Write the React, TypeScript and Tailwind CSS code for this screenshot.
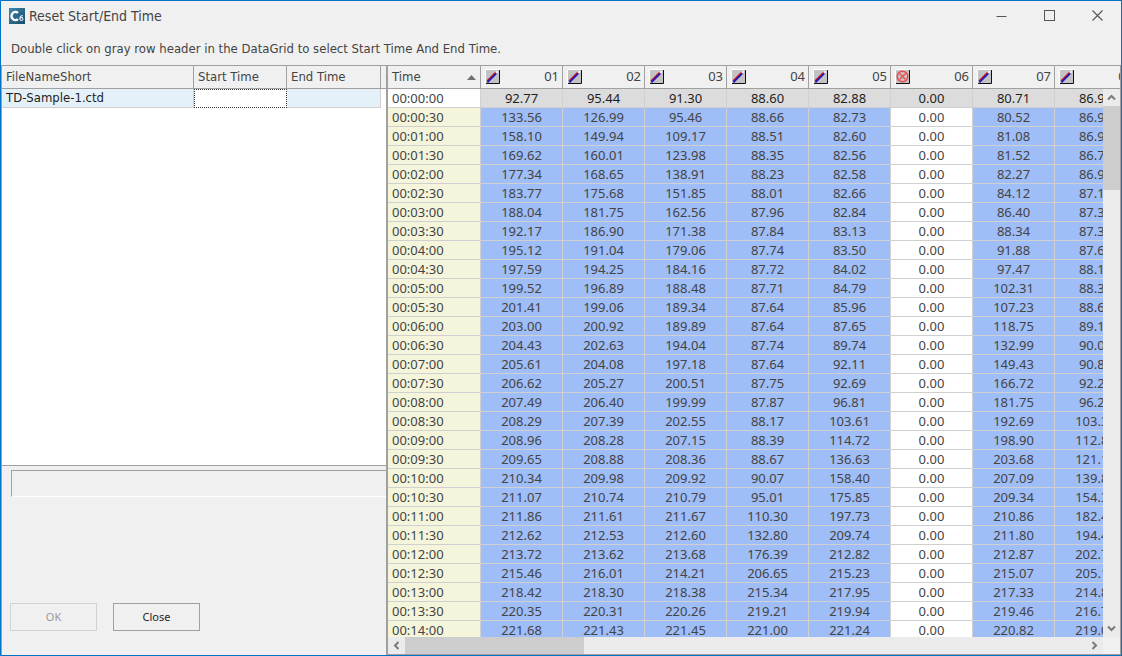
import { useState } from 'react'

interface Row {
  time: string
  values: string[]
}

const DATA = `
00:00:00 92.77 95.44 91.30 88.60 82.88 0.00 80.71 86.96
00:00:30 133.56 126.99 95.46 88.66 82.73 0.00 80.52 86.94
00:01:00 158.10 149.94 109.17 88.51 82.60 0.00 81.08 86.91
00:01:30 169.62 160.01 123.98 88.35 82.56 0.00 81.52 86.79
00:02:00 177.34 168.65 138.91 88.23 82.58 0.00 82.27 86.95
00:02:30 183.77 175.68 151.85 88.01 82.66 0.00 84.12 87.12
00:03:00 188.04 181.75 162.56 87.96 82.84 0.00 86.40 87.33
00:03:30 192.17 186.90 171.38 87.84 83.13 0.00 88.34 87.38
00:04:00 195.12 191.04 179.06 87.74 83.50 0.00 91.88 87.64
00:04:30 197.59 194.25 184.16 87.72 84.02 0.00 97.47 88.12
00:05:00 199.52 196.89 188.48 87.71 84.79 0.00 102.31 88.36
00:05:30 201.41 199.06 189.34 87.64 85.96 0.00 107.23 88.65
00:06:00 203.00 200.92 189.89 87.64 87.65 0.00 118.75 89.14
00:06:30 204.43 202.63 194.04 87.74 89.74 0.00 132.99 90.02
00:07:00 205.61 204.08 197.18 87.64 92.11 0.00 149.43 90.85
00:07:30 206.62 205.27 200.51 87.75 92.69 0.00 166.72 92.26
00:08:00 207.49 206.40 199.99 87.87 96.81 0.00 181.75 96.24
00:08:30 208.29 207.39 202.55 88.17 103.61 0.00 192.69 103.36
00:09:00 208.96 208.28 207.15 88.39 114.72 0.00 198.90 112.84
00:09:30 209.65 208.88 208.36 88.67 136.63 0.00 203.68 121.15
00:10:00 210.34 209.98 209.92 90.07 158.40 0.00 207.09 139.82
00:10:30 211.07 210.74 210.79 95.01 175.85 0.00 209.34 154.34
00:11:00 211.86 211.61 211.67 110.30 197.73 0.00 210.86 182.41
00:11:30 212.62 212.53 212.60 132.80 209.74 0.00 211.80 194.47
00:12:00 213.72 213.62 213.68 176.39 212.82 0.00 212.87 202.73
00:12:30 215.46 216.01 214.21 206.65 215.23 0.00 215.07 205.16
00:13:00 218.42 218.30 218.38 215.34 217.95 0.00 217.33 214.85
00:13:30 220.35 220.31 220.26 219.21 219.94 0.00 219.46 216.72
00:14:00 221.68 221.43 221.45 221.00 221.24 0.00 220.82 219.03
`

const ROWS: Row[] = DATA.trim()
  .split('\n')
  .map((line) => {
    const [time, ...values] = line.split(' ')
    return { time, values }
  })

const CHANNELS = ['01', '02', '03', '04', '05', '06', '07', '08']
const DISABLED_CHANNEL = '06'

function AppIcon() {
  return (
    <svg width="16" height="16" viewBox="0 0 16 16" aria-hidden="true">
      <defs>
        <linearGradient id="logo" x1="0" y1="0" x2="1" y2="1">
          <stop offset="0" stopColor="#3a87ad" />
          <stop offset="1" stopColor="#1b4b66" />
        </linearGradient>
      </defs>
      <rect width="16" height="16" fill="url(#logo)" />
      <path d="M9 4.9A4 4 0 1 0 9 11.1" fill="none" stroke="#fff" strokeWidth="2.4" />
      <path d="M13.8 7.6C12 7.4 10.9 8.8 10.9 10.6" fill="none" stroke="#cfe6f2" strokeWidth="1.3" />
      <circle cx="12.4" cy="10.9" r="1.5" fill="none" stroke="#cfe6f2" strokeWidth="1.2" />
    </svg>
  )
}

function PenIcon() {
  return (
    <svg width="15" height="15" viewBox="0 0 15 15" aria-hidden="true">
      <rect width="15" height="15" fill="#c3c3c3" />
      <path d="M0.5 15V0.5H15" fill="none" stroke="#fff" />
      <path d="M1 14.5H14.5V1" fill="none" stroke="#111" />
      <path d="M2 12L10.8 3.2" stroke="#c01020" strokeWidth="1.5" />
      <path d="M2.4 13.4L11.8 4" stroke="#1a10c0" strokeWidth="1.7" />
      <path d="M11 4L12.8 2.2" stroke="#f4f4f4" strokeWidth="2" />
    </svg>
  )
}

function OffIcon() {
  return (
    <svg width="15" height="15" viewBox="0 0 15 15" aria-hidden="true">
      <rect width="15" height="15" fill="#c3c3c3" />
      <path d="M0.5 15V0.5H15" fill="none" stroke="#fff" />
      <path d="M1 14.5H14.5V1" fill="none" stroke="#111" />
      <circle cx="7.5" cy="7.5" r="5.3" fill="none" stroke="#f04848" strokeWidth="1.5" />
      <path d="M4.5 4.5L10.5 10.5M10.5 4.5L4.5 10.5" stroke="#f04848" strokeWidth="1.2" />
    </svg>
  )
}

function Chevron({ d }: { d: string }) {
  return (
    <svg width="9" height="9" viewBox="0 0 9 9" aria-hidden="true">
      <path d={d} fill="none" stroke="#7a7a7a" strokeWidth="2" />
    </svg>
  )
}

function TitleBar() {
  return (
    <header className="flex h-[30px] shrink-0 items-center pl-2">
      <AppIcon />
      <h1 className="ml-1 flex-1 text-[14px]">Reset Start/End Time</h1>
      <div className="flex h-full pb-[2px] text-[#555]">
        <button type="button" aria-label="Minimize" className="flex w-12 items-center justify-center">
          <svg width="11" height="11" viewBox="0 0 11 11">
            <path d="M0.5 6.5H10.5" stroke="currentColor" />
          </svg>
        </button>
        <button type="button" aria-label="Maximize" className="flex w-12 items-center justify-center">
          <svg width="11" height="11" viewBox="0 0 11 11">
            <rect x="0.5" y="0.5" width="10" height="10" fill="none" stroke="currentColor" />
          </svg>
        </button>
        <button type="button" aria-label="Close window" className="flex w-12 items-center justify-center">
          <svg width="11" height="11" viewBox="0 0 11 11">
            <path d="M0.5 0.5L10.5 10.5M10.5 0.5L0.5 10.5" stroke="currentColor" strokeWidth="1.1" />
          </svg>
        </button>
      </div>
    </header>
  )
}

function FileGrid() {
  return (
    <div className="h-[400px] border-b border-[#a0a0a0] bg-white">
      <table className="w-full table-fixed border-separate border-spacing-0">
        <colgroup>
          <col className="w-[192px]" />
          <col className="w-[93px]" />
          <col className="w-[94px]" />
          <col />
        </colgroup>
        <thead>
          <tr className="h-[23px] bg-[#f0f0f0] text-left">
            <th className="border-r border-b border-[#a0a0a0] px-1 font-normal">FileNameShort</th>
            <th className="border-r border-b border-[#a0a0a0] px-1 font-normal">Start Time</th>
            <th className="border-r border-b border-[#a0a0a0] px-1 font-normal">End Time</th>
            <td className="border-b border-[#a0a0a0]" />
          </tr>
        </thead>
        <tbody>
          <tr className="h-[19px] text-[#1e1e1e]">
            <td className="border-r border-b border-[#d0d0d0] bg-[#e4f1f9] px-1">TD-Sample-1.ctd</td>
            <td className="border border-dotted border-[#333] bg-white" />
            <td className="border-r border-b border-[#d0d0d0] bg-[#e4f1f9]" />
            <td />
          </tr>
        </tbody>
      </table>
    </div>
  )
}

function DataGrid() {
  const [selected, setSelected] = useState(0)

  function cellColor(channel: string, row: number) {
    if (row === selected) return 'bg-[#dcdcdc] text-[#1e1e1e]'
    if (channel === DISABLED_CHANNEL) return 'bg-white'
    return 'bg-[#9fbdf6]'
  }

  return (
    <div className="relative min-h-0 flex-1 overflow-hidden">
      <table className="w-[749px] table-fixed border-separate border-spacing-0 font-['Noto_Sans',sans-serif]">
        <thead>
          <tr className="h-[23px]">
            <th className="w-[93px] border-r border-b border-[#a0a0a0] px-1 text-left font-['DejaVu_Sans_Condensed','DejaVu_Sans',sans-serif] font-normal">
              <div className="flex items-center justify-between">
                Time
                <svg width="9" height="5" viewBox="0 0 9 5" aria-hidden="true">
                  <path d="M0 5L4.5 0L9 5Z" fill="#707070" />
                </svg>
              </div>
            </th>
            {CHANNELS.map((channel) => (
              <th key={channel} className="w-[82px] border-r border-b border-[#a0a0a0] pr-[3px] pb-[2px] pl-1 font-normal">
                <div className="flex items-center justify-between">
                  <button type="button" aria-label={`Channel ${channel}`}>
                    {channel === DISABLED_CHANNEL ? <OffIcon /> : <PenIcon />}
                  </button>
                  {channel}
                </div>
              </th>
            ))}
          </tr>
        </thead>
        <tbody>
          {ROWS.map((row, i) => (
            <tr key={row.time} className="h-[19px]" onDoubleClick={() => setSelected(i)}>
              <td className={`border-r border-b border-[#d0d0d0] px-1 ${i === selected ? 'bg-white' : 'bg-[#f5f5dc]'}`}>
                {row.time}
              </td>
              {row.values.map((value, c) => (
                <td
                  key={CHANNELS[c]}
                  className={`border-r border-b border-[#d0d0d0] text-center ${cellColor(CHANNELS[c], i)}`}
                >
                  {value}
                </td>
              ))}
            </tr>
          ))}
        </tbody>
      </table>

      {/* Vertical scroll bar, below the header */}
      <div className="absolute top-[23px] right-0 bottom-0 flex w-[17px] flex-col bg-[#ebebeb]">
        <button type="button" aria-label="Scroll up" className="flex h-[17px] items-center justify-center">
          <Chevron d="M1 6.5L4.5 3L8 6.5" />
        </button>
        <div className="h-[84px] bg-[#cdcdcd]" />
        <div className="flex-1" />
        <button type="button" aria-label="Scroll down" className="flex h-[17px] items-center justify-center">
          <Chevron d="M1 2.5L4.5 6L8 2.5" />
        </button>
      </div>
    </div>
  )
}

export default function App() {
  return (
    <div className="flex h-screen flex-col border border-[#0173c7] bg-[#f0f0f0] font-['DejaVu_Sans_Condensed','DejaVu_Sans',sans-serif] text-[13px] leading-[18px] text-[#444]">
      <TitleBar />
      <p className="h-[34px] shrink-0 px-[10px] pt-[9px]">
        Double click on gray row header in the DataGrid to select Start Time And End Time.
      </p>

      <main className="flex min-h-0 flex-1 border-t border-[#a0a0a0]">
        <section className="flex w-[385px] shrink-0 flex-col border-l border-[#a0a0a0]">
          <FileGrid />
          <div className="mt-1 ml-[9px] h-[27px] border-t border-b border-l border-t-[#a0a0a0] border-b-white border-l-[#a0a0a0]" />
          <div className="mt-auto flex gap-4 pb-6 pl-2 font-['Noto_Sans',sans-serif] text-[11px]">
            <button type="button" disabled className="h-7 w-[87px] border border-[#d2d2d2] text-[#999]">
              OK
            </button>
            <button type="button" className="h-7 w-[87px] border border-[#a0a0a0] text-[#1e1e1e]">
              Close
            </button>
          </div>
        </section>

        <section className="flex min-w-0 flex-1 flex-col border-r border-b border-l-2 border-[#a0a0a0]">
          <DataGrid />
          {/* Horizontal scroll bar */}
          <div className="flex h-[17px] shrink-0 bg-[#ebebeb]">
            <button type="button" aria-label="Scroll left" className="flex w-[17px] items-center justify-center">
              <Chevron d="M6.5 1L3 4.5L6.5 8" />
            </button>
            <div className="w-[179px] bg-[#cdcdcd]" />
            <div className="flex-1" />
            <button type="button" aria-label="Scroll right" className="flex w-[17px] items-center justify-center">
              <Chevron d="M2.5 1L6 4.5L2.5 8" />
            </button>
            <div className="w-[17px] bg-[#f0f0f0]" />
          </div>
        </section>
      </main>
    </div>
  )
}
